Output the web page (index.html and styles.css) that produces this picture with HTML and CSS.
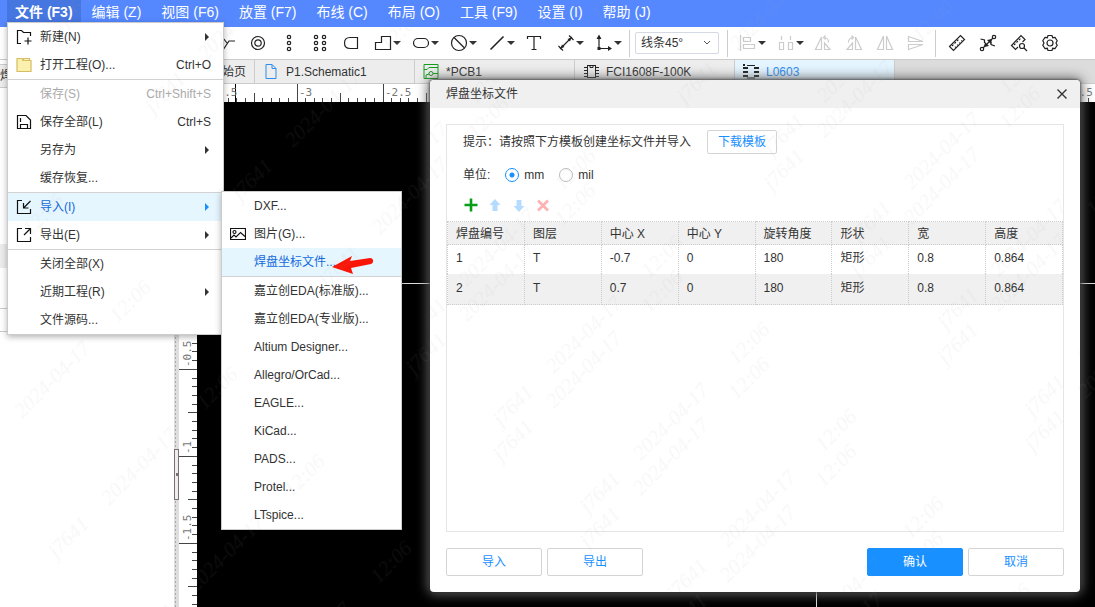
FILE: index.html
```html
<!DOCTYPE html>
<html lang="zh-CN">
<head>
<meta charset="utf-8">
<title>L0603</title>
<link rel="stylesheet" href="styles.css">
</head>
<body>
<nav class="menubar">
  <button class="menubar-item is-open">文件 (F3)</button>
  <button class="menubar-item">编辑 (Z)</button>
  <button class="menubar-item">视图 (F6)</button>
  <button class="menubar-item">放置 (F7)</button>
  <button class="menubar-item">布线 (C)</button>
  <button class="menubar-item">布局 (O)</button>
  <button class="menubar-item">工具 (F9)</button>
  <button class="menubar-item">设置 (I)</button>
  <button class="menubar-item">帮助 (J)</button>
</nav>

<div class="toolbar">
  <button class="tool" aria-label="网络"><svg viewBox="0 0 18 18"><path d="M0 4h5l4 5M17 7h-6L5 16"/></svg></button>
  <button class="tool" aria-label="焊盘"><svg viewBox="0 0 18 18"><circle cx="9" cy="9" r="6.5"/><circle cx="9" cy="9" r="3.2"/></svg></button>
  <button class="tool" aria-label="单排焊盘"><svg viewBox="0 0 18 18"><circle cx="9" cy="3" r="1.7"/><circle cx="9" cy="9" r="1.7"/><circle cx="9" cy="15" r="1.7"/></svg></button>
  <button class="tool" aria-label="双排焊盘"><svg viewBox="0 0 18 18"><circle cx="5" cy="3" r="1.7"/><circle cx="5" cy="9" r="1.7"/><circle cx="5" cy="15" r="1.7"/><circle cx="13" cy="3" r="1.7"/><circle cx="13" cy="9" r="1.7"/><circle cx="13" cy="15" r="1.7"/></svg></button>
  <button class="tool" aria-label="异形焊盘"><svg viewBox="0 0 18 18"><path d="M15.500 3.500v11H8C4 14.500 2.500 12 2.500 9S4 3.500 8 3.500z"/></svg></button>
  <button class="tool has-caret" aria-label="铺铜"><svg viewBox="0 0 18 18"><path d="M1.500 8.500h6v-6h9v13h-15z"/></svg><i class="caret"></i></button>
  <button class="tool has-caret" aria-label="槽孔"><svg viewBox="0 0 18 18"><rect x="1.500" y="4.500" width="15" height="9" rx="4.500"/></svg><i class="caret"></i></button>
  <button class="tool has-caret" aria-label="禁止区域"><svg viewBox="0 0 18 18"><circle cx="9" cy="9" r="7.500"/><path d="M4 3.500l10.500 10.500"/></svg><i class="caret"></i></button>
  <button class="tool has-caret" aria-label="线条"><svg viewBox="0 0 18 18"><path d="M2.500 15.500l13-13" stroke-width="1.600"/></svg><i class="caret"></i></button>
  <button class="tool" aria-label="文本"><svg viewBox="0 0 18 18"><path d="M2.500 5V2.500h13V5M9 2.500v13M6.500 15.500h5"/></svg></button>
  <button class="tool has-caret" aria-label="尺寸"><svg viewBox="0 0 18 18"><path d="M3 15L15 3M1.500 12l4.500 4.500M12 1.500l4.500 4.500"/><path class="solid" d="M14.500 3.500l-1.500 4-2.500-2.500zM3.500 14.500l1.500-4L7.500 13z"/></svg><i class="caret"></i></button>
  <button class="tool has-caret" aria-label="坐标"><svg viewBox="0 0 18 18"><path d="M4 2v12.500h12"/><path class="solid" d="M1.500 5L4 .5 6.500 5zM13 12l4 2.500-4 2.500zM2.500 13h3v3h-3z"/></svg><i class="caret"></i></button>
  <span class="tool-sep"></span>
  <label class="angle">
    <select aria-label="线条角度"><option>线条45°</option></select>
    <svg viewBox="0 0 8 6"><path d="M1 1l3 3 3-3"/></svg>
  </label>
  <span class="tool-sep"></span>
  <button class="tool has-caret" disabled aria-label="对齐"><svg viewBox="0 0 18 18"><path d="M1.500 1v16M4.500 3.500h7v4h-7zM4.500 10.500h11v4h-11z"/></svg><i class="caret"></i></button>
  <button class="tool has-caret" disabled aria-label="分布"><svg viewBox="0 0 18 18"><path d="M2.500 8.500h4v7h-4zM11.500 8.500h4v7h-4zM4.500 2v4M13.500 2v4"/></svg><i class="caret"></i></button>
  <button class="tool" disabled aria-label="左旋"><svg viewBox="0 0 18 18"><path d="M7.500 3v12.500h-6zM10.500 9l5.500 6.500h-5.500zM9.500 3.500c3 0 5 2 5 5M11.500 1.500l-2 2 2 2"/></svg></button>
  <button class="tool" disabled aria-label="右旋"><svg viewBox="0 0 18 18"><path d="M10.500 3v12.500h6zM7.500 9L2 15.500h5.500zM8.500 3.500c-3 0-5 2-5 5M6.500 1.500l2 2-2 2"/></svg></button>
  <button class="tool" disabled aria-label="水平翻转"><svg viewBox="0 0 18 18"><path d="M7.500 2v13.500h-6zM10.500 2v13.500h6z"/></svg></button>
  <button class="tool" disabled aria-label="垂直翻转"><svg viewBox="0 0 18 18"><path d="M1.500 2.500L16 7.500H1.500zM1.500 15.500L16 10.500H1.500z"/></svg></button>
  <span class="tool-sep"></span>
  <button class="tool" aria-label="测量"><svg viewBox="0 0 18 18"><path d="M1.500 12.500l11-11 4 4-11 11z"/><path d="M4 12l7-7" stroke-dasharray="2 1.500"/><path d="M7 13.500l7-7" stroke-dasharray="1 2"/></svg></button>
  <button class="tool" aria-label="飞线"><svg viewBox="0 0 18 18"><circle cx="3" cy="15" r="1.700"/><circle cx="15" cy="3" r="1.700"/><path d="M4 14L14 4M1.500 5l4 1v3M16 12l-4-1.500V8"/><path class="solid" d="M5 13l1-5 4 4zM13 5l-5 1 4 4z"/></svg></button>
  <button class="tool" aria-label="检查尺寸"><svg viewBox="0 0 18 18"><path d="M8 13l-2.500 2.500-4-4 9.500-10 4 4L12.500 8"/><path d="M4 11l6.500-6.500" stroke-dasharray="2 1.500"/><circle cx="12" cy="12" r="2.500"/><path d="M14 14l3 3"/></svg></button>
  <button class="tool" aria-label="设置"><svg viewBox="0 0 18 18"><path d="M7 1.500h4l.7 2.200 2.300-.4 2.200 3.400L15 9l1.200 2.300-2.200 3.400-2.300-.4-.7 2.200H7l-.7-2.200-2.300.4-2.200-3.400L3 9 1.800 6.700 4 3.300l2.300.4z"/><circle cx="9" cy="9" r="3"/></svg></button>
</div>

<main class="workspace">
  <aside class="side">
    <div class="side-tab">焊盘</div>
    <div class="side-list"></div>
    <div class="side-group"></div>
    <div class="side-foot"></div>
  </aside>
  <div class="splitter"><span class="splitter-grip"></span></div>
  <section class="editor">
    <div class="tabs">
      <a class="tab tab-home" href="#"><svg viewBox="0 0 15 15" class="blue"><path d="M2 7l5.500-5L13 7v6.500H2z"/></svg>开始页</a>
      <a class="tab" href="#"><svg viewBox="0 0 15 15" class="blue"><path d="M2.500.5h6l4 4v10h-10zM8.500.5v4h4"/></svg>P1.Schematic1</a>
      <a class="tab" href="#"><svg viewBox="0 0 15 15" class="green"><path d="M.5.500h14v14H.5zM.5 5.500h3l2-2h9"/><circle cx="7.500" cy="9.500" r="2"/><path d="M9.500 9.500h5M2.500 14v-3l3-1"/></svg>*PCB1</a>
      <a class="tab" href="#"><svg viewBox="0 0 16 15" class="dark"><rect x="4.500" y="1.500" width="8" height="12"/><path d="M1 3.500h3M1 6.500h3M1 9.500h3M1 12.500h3M13 3.500h3M13 6.500h3M13 9.500h3M13 12.500h3M7 2v1.500h3V2"/></svg>FCI1608F-100K</a>
      <a class="tab is-active" href="#"><svg viewBox="0 0 16 15" class="dark"><path d="M4 1.500h8M4 14h8"/><path d="M0 4h5M0 8h5M0 12h5M11 4h5M11 8h5M11 12h5M0 1h2" stroke-width="2"/></svg>L0603</a>
    </div>
    <div class="board">
      <div class="ruler-corner"></div>
      <svg class="ruler-x" aria-hidden="true">
        <defs><pattern id="ticks-x" x="14" width="86" height="18" patternUnits="userSpaceOnUse">
          <path d="M.5 0v18M43.500 9v9M8.500 14v4M17.500 14v4M25.500 14v4M34.500 14v4M51.500 14v4M60.500 14v4M68.500 14v4M77.500 14v4" stroke="#444"/></pattern></defs>
        <rect width="100%" height="18" fill="url(#ticks-x)"/>
        <path d="M38.500 0v18" stroke="#000"/>
        <g class="ruler-text"><text x="14" y="12">-3.5</text><text x="102" y="12">-3</text><text x="188" y="12">-2.5</text><text x="876" y="12">1.5</text></g>
      </svg>
      <svg class="ruler-y" aria-hidden="true">
        <defs><pattern id="ticks-y" y="6" width="18" height="87" patternUnits="userSpaceOnUse">
          <path d="M0 .5h18M9 43.500h9M13 9.500h5M13 17.500h5M13 26.500h5M13 35.500h5M13 52.500h5M13 61.500h5M13 69.500h5M13 78.500h5" stroke="#444"/></pattern></defs>
        <rect width="18" height="100%" fill="url(#ticks-y)"/>
        <g class="ruler-text"><text transform="translate(12 265) rotate(-90)">-0.5</text><text transform="translate(12 352) rotate(-90)">-1</text><text transform="translate(12 439) rotate(-90)">-1.5</text></g>
      </svg>
      <svg class="canvas" aria-hidden="true"><path d="M0 181.500h900M619.500 0v520" stroke="#ddd"/></svg>
    </div>
  </section>
</main>

<div class="menu menu-file" role="menu">
  <button class="menu-item"><svg viewBox="0 0 16 16"><path d="M5 14.500H1.500V1.500h4l2 2h7V7M12 8.500v7M8.500 12h7"/></svg><span>新建(N)</span><i class="arrow"></i></button>
  <button class="menu-item"><svg viewBox="0 0 16 16"><path class="folder" d="M1 14.500v-13h5l1 2h8v11zM7 3.500l.5-2h6v2"/></svg><span>打开工程(O)...</span><kbd>Ctrl+O</kbd></button>
  <hr>
  <button class="menu-item" disabled><i class="blank"></i><span>保存(S)</span><kbd>Ctrl+Shift+S</kbd></button>
  <button class="menu-item"><svg viewBox="0 0 16 16"><path d="M1.500 1.500H10l4.500 4.500v8.500h-13zM4.500 14.500v-4h7v4M4.500 4v4"/></svg><span>保存全部(L)</span><kbd>Ctrl+S</kbd></button>
  <button class="menu-item"><i class="blank"></i><span>另存为</span><i class="arrow"></i></button>
  <button class="menu-item"><i class="blank"></i><span>缓存恢复...</span></button>
  <hr>
  <button class="menu-item is-hover"><svg viewBox="0 0 16 16"><path d="M6 1.500H1.500v13h13V10M14.500 2L8 8.500M7.500 4v5h5"/></svg><span>导入(I)</span><i class="arrow"></i></button>
  <button class="menu-item"><svg viewBox="0 0 16 16"><path d="M6 1.500H1.500v13h13V10M8 8l6-6M9 1.500h5.500V7"/></svg><span>导出(E)</span><i class="arrow"></i></button>
  <hr>
  <button class="menu-item"><i class="blank"></i><span>关闭全部(X)</span></button>
  <button class="menu-item"><i class="blank"></i><span>近期工程(R)</span><i class="arrow"></i></button>
  <button class="menu-item"><i class="blank"></i><span>文件源码...</span></button>
</div>

<div class="menu menu-import" role="menu">
  <button class="menu-item"><i class="blank"></i><span>DXF...</span></button>
  <button class="menu-item"><svg viewBox="0 0 16 16"><path d="M.5 2.500h15v11H.5z"/><circle cx="4.500" cy="6" r="1.500"/><path d="M1 12l3-3 2 2 4.500-4.500L15 10.500"/></svg><span>图片(G)...</span></button>
  <button class="menu-item is-hover"><i class="blank"></i><span>焊盘坐标文件...</span></button>
  <hr>
  <button class="menu-item"><i class="blank"></i><span>嘉立创EDA(标准版)...</span></button>
  <button class="menu-item"><i class="blank"></i><span>嘉立创EDA(专业版)...</span></button>
  <button class="menu-item"><i class="blank"></i><span>Altium Designer...</span></button>
  <button class="menu-item"><i class="blank"></i><span>Allegro/OrCad...</span></button>
  <button class="menu-item"><i class="blank"></i><span>EAGLE...</span></button>
  <button class="menu-item"><i class="blank"></i><span>KiCad...</span></button>
  <button class="menu-item"><i class="blank"></i><span>PADS...</span></button>
  <button class="menu-item"><i class="blank"></i><span>Protel...</span></button>
  <button class="menu-item"><i class="blank"></i><span>LTspice...</span></button>
  <svg class="pointer" viewBox="0 0 44 20" aria-hidden="true"><path d="M1 12L21 1l-2 5 20-3c4 0 4 5 1 6l-20 4 2 6z" fill="#f91607"/></svg>
</div>

<div class="dialog" role="dialog" aria-labelledby="dialog-title">
  <header class="dialog-head">
    <h1 id="dialog-title">焊盘坐标文件</h1>
    <button class="close" aria-label="关闭"><svg viewBox="0 0 10 10"><path d="M.5.500l9 9M9.500.500l-9 9"/></svg></button>
  </header>
  <div class="dialog-body">
    <div class="panel">
      <div class="hint"><span>提示：请按照下方模板创建坐标文件并导入</span><button class="btn btn-small">下载模板</button></div>
      <div class="units">
        <span>单位:</span>
        <label><input type="radio" name="unit" checked>mm</label>
        <label><input type="radio" name="unit">mil</label>
      </div>
      <div class="row-tools">
        <button aria-label="添加"><svg viewBox="0 0 14 14"><path d="M7 .5v13M.5 7h13" stroke="#0a9d1a" stroke-width="2.600"/></svg></button>
        <button aria-label="上移"><svg viewBox="0 0 14 14"><path d="M7 1l5.500 6H9.500v6h-5V7h-3z" fill="#b5dcff"/></svg></button>
        <button aria-label="下移"><svg viewBox="0 0 14 14"><path d="M7 14l5.500-6H9.500V2h-5v6h-3z" fill="#b5dcff"/></svg></button>
        <button aria-label="删除"><svg viewBox="0 0 14 14"><path d="M2 2.500l10 10M12 2.500l-10 10" stroke="#ffb1b1" stroke-width="2.600"/></svg></button>
      </div>
      <table class="grid">
        <thead><tr><th>焊盘编号</th><th>图层</th><th>中心 X</th><th>中心 Y</th><th>旋转角度</th><th>形状</th><th>宽</th><th>高度</th></tr></thead>
        <tbody>
          <tr><td>1</td><td>T</td><td>-0.7</td><td>0</td><td>180</td><td>矩形</td><td>0.8</td><td>0.864</td></tr>
          <tr><td>2</td><td>T</td><td>0.7</td><td>0</td><td>180</td><td>矩形</td><td>0.8</td><td>0.864</td></tr>
        </tbody>
      </table>
    </div>
    <footer class="actions">
      <button class="btn">导入</button>
      <button class="btn">导出</button>
      <button class="btn btn-primary">确认</button>
      <button class="btn">取消</button>
    </footer>
  </div>
  <svg class="stamp" aria-hidden="true">
    <defs><pattern id="stamp-dialog" width="383" height="123" patternUnits="userSpaceOnUse" patternTransform="translate(-368 -58) rotate(-45)">
      <text x="24" y="105">j7641</text><text x="99" y="105">2024-04-17</text><text x="234" y="105">12:06</text></pattern></defs>
    <rect width="100%" height="100%" fill="url(#stamp-dialog)"/>
  </svg>
</div>

<svg class="stamp" aria-hidden="true">
  <defs><pattern id="stamp-page" width="383" height="123" patternUnits="userSpaceOnUse" patternTransform="translate(62 57) rotate(-45)">
    <text x="24" y="105">j7641</text><text x="99" y="105">2024-04-17</text><text x="234" y="105">12:06</text></pattern></defs>
  <rect width="100%" height="100%" fill="url(#stamp-page)"/>
</svg>
</body>
</html>
```

FILE: styles.css
```css
* { box-sizing: border-box; }

body {
  margin: 0;
  height: 100vh;
  display: flex;
  flex-direction: column;
  position: relative;
  overflow: hidden;
  font: 12px/16px "Liberation Sans", "Noto Sans CJK SC", sans-serif;
  color: #333;
  background: #fff;
}

button, select { font: inherit; color: inherit; }
button { padding: 0; border: 0; background: none; }
a { color: inherit; text-decoration: none; }
svg { fill: none; stroke: none; flex: none; }

.menubar {
  display: flex;
  flex: none;
  height: 27px;
  padding-left: 7px;
  background: #5588ff;
  color: #fff;
}
.menubar-item {
  padding: 0 10px 4px;
  font-size: 14px;
  line-height: 20px;
  white-space: nowrap;
}
.menubar-item.is-open {
  margin-right: 1px;
  padding: 0 8px 4px;
  font-weight: bold;
  background: #4676e0;
}

.toolbar {
  display: flex;
  flex: none;
  align-items: center;
  height: 33px;
  padding-left: 211px;
  border-bottom: 1px solid #ccc;
}
.tool {
  display: flex;
  flex: none;
  align-items: center;
  justify-content: center;
  width: 31px;
  height: 24px;
}
.tool.has-caret { width: 38px; padding-left: 4px; gap: 1px; }
.tool svg { width: 18px; height: 18px; stroke: #222; stroke-width: 1.2; }
.tool:disabled svg { stroke: #ccc; }
.tool .solid { fill: #222; stroke: none; }
.caret {
  border: 4px solid transparent;
  border-top-color: #333;
  border-bottom: 0;
}
.tool-sep { flex: none; width: 1px; height: 27px; margin: 0 5px 0 4px; background: #ccc; }
.angle + .tool-sep { margin: 0 3px 0 8px; }
.angle { position: relative; flex: none; width: 84px; }
.angle select {
  display: block;
  width: 100%;
  height: 22px;
  padding: 0 5px;
  border: 1px solid #d5d9e3;
  border-radius: 2px;
  background: #fff;
  appearance: none;
}
.angle svg { position: absolute; right: 8px; top: 8px; width: 8px; height: 6px; stroke: #555; }

.workspace { display: flex; flex: 1; min-height: 0; }
.side { display: flex; flex-direction: column; flex: none; width: 174px; padding-top: 4px; }
.side-tab { height: 24px; line-height: 22px; border: solid #ccc; border-width: 1px 0; background: #eee; }
.side-list { height: 156px; }
.side-group { height: 24px; background: #ececec; }
.side-foot { height: 24px; margin-top: 40px; border: solid #ccc; border-width: 1px 0; }
.splitter {
  display: flex;
  flex: none;
  width: 5px;
  background: #dedede radial-gradient(#aaa 1px, transparent 1px) 0 0 / 3px 4px repeat-y;
}
.splitter-grip {
  width: 5px;
  height: 51px;
  margin-top: 389px;
  border: 1px solid #7c7072;
  background: #eee linear-gradient(#7c7072, #7c7072) 1px 23px / 2px 3px no-repeat;
}

.editor { display: flex; flex-direction: column; flex: 1; min-width: 0; }
.tabs { display: flex; flex: none; height: 24px; background: #dcdcdc; border-bottom: 1px solid #ccc; }
.tab {
  display: flex;
  align-items: center;
  gap: 7px;
  width: 160px;
  padding-left: 8px;
  border-right: 1px solid #ccc;
  background: #ededed;
}
.tab-home { width: 76px; }
.tab.is-active { background: #e4f5ff; color: #2d8cf0; }
.tab svg { width: 16px; height: 15px; }
.blue { stroke: #2d8cf0; }
.green { stroke: #149c1c; }
.dark { stroke: #222; }

.board {
  display: grid;
  flex: 1;
  grid-template: 18px 1fr / 18px 1fr;
  min-height: 0;
}
.ruler-x, .ruler-y, .canvas { display: block; width: 100%; height: 100%; }
.canvas { background: #000; }
.ruler-text { font: 11px "DejaVu Sans Mono", monospace; fill: #777; }

.menu {
  position: absolute;
  border: 1px solid #ccc;
  background: #fff;
  box-shadow: 0 2px 6px rgba(0, 0, 0, .3);
}
.menu-file { left: 7px; top: 22px; width: 217px; }
.menu-import { left: 221px; top: 191px; width: 181px; }
.menu hr { margin: 0; border: 0; border-top: 1px solid #d2d2d2; }
.menu-item {
  display: flex;
  align-items: center;
  width: 100%;
  height: 28px;
  padding: 0 12px 0 8px;
  text-align: left;
}
.menu-item svg { width: 16px; height: 16px; margin-right: 8px; stroke: #111; stroke-width: 1.2; }
.menu-item .folder { fill: #fbf0ae; stroke: #d6bd62; }
.menu-item span { flex: 1; white-space: nowrap; }
.menu-item kbd { font: inherit; }
.menu-item:disabled { color: #aaa; }
.menu-item.is-hover { background: #e6f6ff; color: #1269db; }
.menu-item .blank { width: 24px; }
.menu-item .arrow { margin-right: 2px; border: 4px solid transparent; border-left-color: #333; border-right: 0; }
.menu-item.is-hover .arrow { border-left-color: #1890ff; }
.pointer { position: absolute; left: 109px; top: 63px; width: 44px; height: 20px; }

.dialog {
  position: absolute;
  left: 430px;
  top: 80px;
  width: 650px;
  border-radius: 4px;
  overflow: hidden;
  background: #fff;
  box-shadow: 0 0 3px #222, 0 0 12px 2px #666;
}
.dialog-head {
  display: flex;
  align-items: center;
  justify-content: space-between;
  height: 28px;
  padding: 0 13px 0 16px;
  background: #f0f0f0;
}
.dialog-head h1 { margin: 0; font: inherit; }
.close { display: flex; }
.close svg { width: 10px; height: 10px; stroke: #333; stroke-width: 1.4; }
.dialog-body { padding: 16px; }
.panel { height: 408px; border: 1px solid #e5e5e5; }
.hint { display: flex; align-items: center; gap: 16px; height: 33px; padding-left: 16px; }
.units { display: flex; align-items: center; height: 33px; padding-left: 16px; }
.units label { display: flex; align-items: center; gap: 5px; margin-left: 15px; }
.units input {
  width: 14px;
  height: 14px;
  margin: 0;
  appearance: none;
  border: 1px solid #bbb;
  border-radius: 50%;
}
.units input:checked { border-color: #1890ff; background: radial-gradient(#1890ff 2px, transparent 3px); }
.row-tools { display: flex; align-items: center; gap: 10px; height: 30px; padding: 0 0 2px 17px; }
.row-tools button { display: flex; }
.row-tools svg { width: 14px; height: 14px; }
.grid { width: 100%; border-collapse: collapse; table-layout: fixed; }
.grid th, .grid td {
  padding: 0 8px;
  border: 0 dotted #ccc;
  border-width: 0 1px;
  font-weight: normal;
  text-align: left;
}
.grid th { height: 23px; padding-top: 2px; border-width: 1px; background: #f0f0f0; }
.grid td { height: 29px; padding-bottom: 2px; }
.grid tbody tr:last-child td { height: 31px; border-bottom-width: 1px; background: #f0f0f0; }

.btn {
  width: 96px;
  height: 28px;
  border: 1px solid #d4d4d4;
  border-radius: 2px;
  background: #fff;
  color: #1890ff;
}
.btn-small { width: 70px; height: 24px; }
.actions { display: flex; gap: 5px; padding-top: 16px; }
.btn-primary { margin-left: auto; border-color: #1890ff; background: #1890ff; color: #fff; }

.stamp {
  position: absolute;
  inset: 0;
  width: 100%;
  height: 100%;
  pointer-events: none;
}
.stamp text { font: italic 21px "Liberation Serif", serif; fill: rgba(150, 150, 150, .08); }
```
